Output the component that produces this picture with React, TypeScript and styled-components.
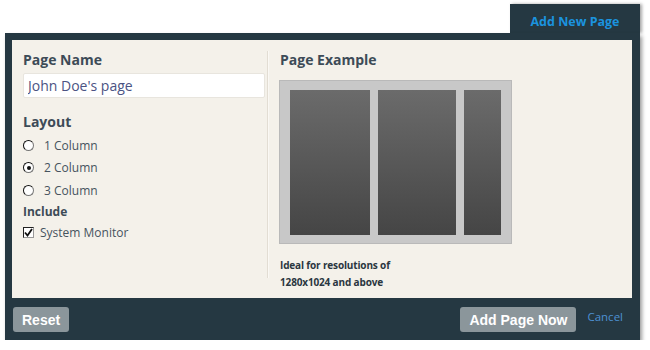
import React from "react";
import styled, { createGlobalStyle } from "styled-components";

const GlobalStyle = createGlobalStyle`
  body {
    margin: 0;
    background: #ffffff;
    font-family: "Open Sans", "DejaVu Sans", sans-serif;
  }
`;

const columns = [80, 78, 37];

const App = () => {
  return (
    <Page>
      <GlobalStyle />
      <Tab>Add New Page</Tab>
      <Frame>
        <Body>
          <LeftColumn>
            <Heading>Page Name</Heading>
            <NameInput defaultValue="John Doe's page" />
            <Heading $top={14}>Layout</Heading>
            <RadioList>
              {["1 Column", "2 Column", "3 Column"].map((label, i) => (
                <RadioRow key={label}>
                  <Radio $checked={i === 1} />
                  <span>{label}</span>
                </RadioRow>
              ))}
            </RadioList>
            <SubHeading>Include</SubHeading>
            <CheckRow>
              <CheckBox>
                <svg width="9" height="9" viewBox="0 0 9 9">
                  <path d="M1 4.5 L3.5 7.5 L8 1" fill="none" stroke="#111" strokeWidth="1.8" />
                </svg>
              </CheckBox>
              <span>System Monitor</span>
            </CheckRow>
          </LeftColumn>
          <Divider />
          <RightColumn>
            <Heading>Page Example</Heading>
            <Preview>
              {columns.map((w) => (
                <PreviewColumn key={w} style={{ width: w }} />
              ))}
            </Preview>
            <Note>
              Ideal for resolutions of
              <br />
              1280x1024 and above
            </Note>
          </RightColumn>
        </Body>
        <Footer>
          <GrayButton>Reset</GrayButton>
          <FooterRight>
            <GrayButton>Add Page Now</GrayButton>
            <CancelLink>Cancel</CancelLink>
          </FooterRight>
        </Footer>
      </Frame>
    </Page>
  );
};

const Page = styled.div`
  width: 635px;
  padding: 4px 0 0 5px;
  display: flex;
  flex-direction: column;
`;

const Tab = styled.div`
  align-self: flex-end;
  width: 130px;
  height: 29px;
  background: #253842;
  color: #1b93df;
  font-weight: 700;
  font-size: 12.5px;
  display: flex;
  align-items: center;
  justify-content: center;
  padding-top: 5px;
  box-sizing: border-box;
  box-shadow: 2px 0 3px rgba(0, 0, 0, 0.35);
`;

const Frame = styled.div`
  background: #253842;
  padding: 7px 8px 0 7px;
  display: flex;
  flex-direction: column;
  box-shadow: 2px 3px 4px rgba(0, 0, 0, 0.4);
`;

const Body = styled.div`
  height: 258px;
  background: #f4f1ea;
  display: flex;
  box-sizing: border-box;
  padding: 10px 0 0 11px;
`;

const LeftColumn = styled.div`
  width: 242px;
  display: flex;
  flex-direction: column;
`;

const RightColumn = styled.div`
  display: flex;
  flex-direction: column;
  padding-left: 11px;
`;

const Divider = styled.div`
  width: 1px;
  margin: 1px 0 20px 2px;
  background: #e2ddd3;
  border-right: 1px solid #faf8f4;
`;

const Heading = styled.div<{ $top?: number }>`
  font-size: 14px;
  font-weight: 700;
  color: #3d4b57;
  line-height: 20px;
  margin-top: ${(p) => p.$top ?? 0}px;
`;

const NameInput = styled.input`
  margin-top: 3px;
  height: 25px;
  width: 242px;
  box-sizing: border-box;
  border: 1px solid #e8e5de;
  border-radius: 2px;
  background: #ffffff;
  padding: 0 4px;
  font-family: "Open Sans", sans-serif;
  font-size: 14px;
  color: #4b5383;
  outline: none;
`;

const RadioList = styled.div`
  display: flex;
  flex-direction: column;
  margin-top: 2px;
`;

const RadioRow = styled.div`
  display: flex;
  align-items: center;
  height: 22.5px;
  font-size: 12px;
  color: #46535e;
  gap: 10px;
`;

const Radio = styled.span<{ $checked: boolean }>`
  width: 9px;
  height: 9px;
  border-radius: 50%;
  border: 1px solid #777;
  border-top-color: #111;
  border-left-color: #111;
  background: #fff;
  position: relative;

  &::after {
    content: "";
    display: ${(p) => (p.$checked ? "block" : "none")};
    position: absolute;
    left: 2.5px;
    top: 2.5px;
    width: 4px;
    height: 4px;
    border-radius: 50%;
    background: #111;
  }
`;

const SubHeading = styled.div`
  font-size: 12px;
  font-weight: 700;
  color: #3d4b57;
  margin-top: 1px;
  line-height: 17px;
`;

const CheckRow = styled.div`
  display: flex;
  align-items: center;
  gap: 6px;
  margin-top: 4px;
  font-size: 12px;
  color: #46535e;
`;

const CheckBox = styled.span`
  width: 9px;
  height: 9px;
  border: 1px solid #222;
  border-right-color: #999;
  border-bottom-color: #999;
  background: #fff;
  display: flex;
  align-items: center;
  justify-content: center;
`;

const Preview = styled.div`
  margin-top: 10px;
  margin-left: -1px;
  width: 233px;
  height: 164px;
  box-sizing: border-box;
  background: #c8c8c8;
  border: 1px solid #b9b9b9;
  padding: 9px 10px 8px 10px;
  display: flex;
  gap: 8px;
`;

const PreviewColumn = styled.div`
  height: 100%;
  background: linear-gradient(#6b6b6b, #454545);
`;

const Note = styled.div`
  margin-top: 13px;
  font-size: 10px;
  font-weight: 700;
  letter-spacing: -0.15px;
  line-height: 17px;
  color: #2a3640;
`;

const Footer = styled.div`
  height: 42px;
  display: flex;
  align-items: flex-start;
  justify-content: space-between;
  padding: 9px 9px 0 1px;
  box-sizing: border-box;
`;

const FooterRight = styled.div`
  display: flex;
  align-items: flex-start;
  gap: 11px;
`;

const GrayButton = styled.button`
  height: 25px;
  padding: 0 9px;
  border: none;
  border-radius: 3px;
  background: #8b969b;
  color: #ffffff;
  font-family: "Liberation Sans", Arial, sans-serif;
  font-weight: 700;
  font-size: 14px;
`;

const CancelLink = styled.a`
  font-size: 11.5px;
  color: #4d90d2;
  line-height: 20px;
`;

export default App;
